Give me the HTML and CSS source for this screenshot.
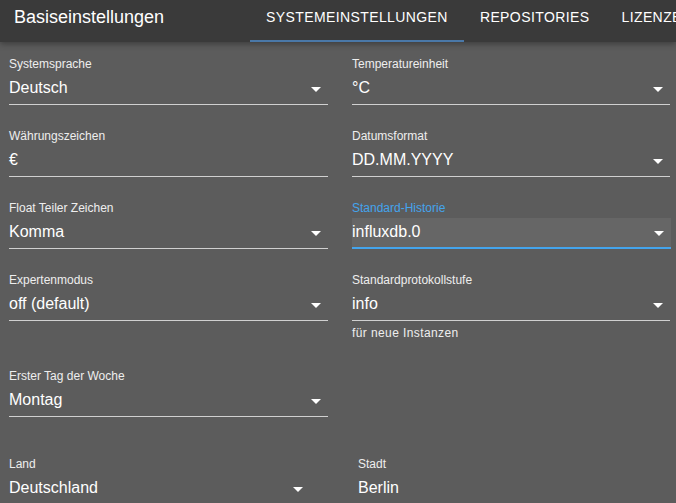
FILE: index.html
```html
<!DOCTYPE html>
<html lang="de">
<head>
<meta charset="utf-8">
<title>Basiseinstellungen</title>
<link rel="stylesheet" href="styles.css">
</head>
<body>
<header class="appbar">
  <div class="title">Basiseinstellungen</div>
  <nav class="tabs">
    <div class="tab active">SYSTEMEINSTELLUNGEN</div>
    <div class="tab">REPOSITORIES</div>
    <div class="tab">LIZENZEN</div>
  </nav>
</header>
<main class="content">
  <div class="grid">
    <div class="field">
      <div class="label">Systemsprache</div>
      <div class="control select"><span class="value">Deutsch</span><svg class="arrow" viewBox="0 0 24 24"><path d="M7 10l5 5 5-5z"/></svg></div>
    </div>
    <div class="field">
      <div class="label">Temperatureinheit</div>
      <div class="control select"><span class="value">°C</span><svg class="arrow" viewBox="0 0 24 24"><path d="M7 10l5 5 5-5z"/></svg></div>
    </div>
    <div class="field">
      <div class="label">Währungszeichen</div>
      <div class="control"><span class="value">€</span></div>
    </div>
    <div class="field">
      <div class="label">Datumsformat</div>
      <div class="control select"><span class="value">DD.MM.YYYY</span><svg class="arrow" viewBox="0 0 24 24"><path d="M7 10l5 5 5-5z"/></svg></div>
    </div>
    <div class="field">
      <div class="label">Float Teiler Zeichen</div>
      <div class="control select"><span class="value">Komma</span><svg class="arrow" viewBox="0 0 24 24"><path d="M7 10l5 5 5-5z"/></svg></div>
    </div>
    <div class="field focused">
      <div class="label">Standard-Historie</div>
      <div class="control select"><span class="value">influxdb.0</span><svg class="arrow" viewBox="0 0 24 24"><path d="M7 10l5 5 5-5z"/></svg></div>
    </div>
    <div class="field">
      <div class="label">Expertenmodus</div>
      <div class="control select"><span class="value">off (default)</span><svg class="arrow" viewBox="0 0 24 24"><path d="M7 10l5 5 5-5z"/></svg></div>
    </div>
    <div class="field">
      <div class="label">Standardprotokollstufe</div>
      <div class="control select"><span class="value">info</span><svg class="arrow" viewBox="0 0 24 24"><path d="M7 10l5 5 5-5z"/></svg></div>
      <div class="helper">für neue Instanzen</div>
    </div>
    <div class="field">
      <div class="label">Erster Tag der Woche</div>
      <div class="control select"><span class="value">Montag</span><svg class="arrow" viewBox="0 0 24 24"><path d="M7 10l5 5 5-5z"/></svg></div>
    </div>
  </div>
  <div class="grid location">
    <div class="field">
      <div class="label">Land</div>
      <div class="control select"><span class="value">Deutschland</span><svg class="arrow" viewBox="0 0 24 24"><path d="M7 10l5 5 5-5z"/></svg></div>
    </div>
    <div class="field">
      <div class="label">Stadt</div>
      <div class="control"><span class="value">Berlin</span></div>
    </div>
  </div>
</main>
</body>
</html>
```
FILE: styles.css
```css
* { box-sizing: border-box; }
html, body {
  margin: 0;
  padding: 0;
  width: 676px;
  height: 503px;
  overflow: hidden;
  background: #5c5c5c;
  font-family: "Liberation Sans", Arial, Helvetica, sans-serif;
  color: #ffffff;
}
.appbar {
  position: relative;
  z-index: 2;
  height: 42px;
  background: #3a3a3a;
  display: flex;
  align-items: stretch;
  box-shadow: 0 2px 6px rgba(0, 0, 0, 0.35);
  white-space: nowrap;
  overflow: hidden;
}
.title {
  font-size: 18px;
  line-height: 22px;
  padding: 6px 0 0 14px;
  width: 250px;
  flex: none;
}
.tabs {
  display: flex;
  align-items: stretch;
}
.tab {
  font-size: 14px;
  font-weight: 500;
  letter-spacing: 0.4px;
  line-height: 16px;
  padding: 9px 16px 0;
  border-bottom: 2px solid transparent;
  flex: none;
}
.tab.active {
  border-bottom-color: #4a78a8;
}
.content {
  padding: 15px 6px 0 9px;
}
.grid {
  display: grid;
  grid-template-columns: 319px 318px;
  column-gap: 24px;
  row-gap: 24px;
  align-items: start;
}
.grid.location {
  margin-top: 40px;
  grid-template-columns: 301px 200px;
  column-gap: 48px;
}
.field {
  display: flex;
  flex-direction: column;
}
.label {
  font-size: 12px;
  line-height: 14px;
  color: #eeeeee;
}
.control {
  position: relative;
  margin-top: 3px;
  height: 31px;
  padding: 4px 0 7px;
  border-bottom: 1px solid #d0d0d0;
}
.value {
  display: block;
  font-size: 16px;
  line-height: 19px;
  color: #ffffff;
}
.arrow {
  position: absolute;
  right: 0;
  top: 3px;
  width: 24px;
  height: 24px;
  fill: #ffffff;
}
.focused .label {
  color: #44a4ec;
}
.focused .control {
  background: #666666;
  border-bottom: 2px solid #44a4ec;
  padding-bottom: 6px;
  margin-right: -1px;
}
.helper {
  font-size: 12px;
  line-height: 14px;
  letter-spacing: 0.4px;
  margin-top: 5px;
  margin-bottom: 5px;
  color: #eeeeee;
}
.location .field:nth-child(2) .control {
  border-bottom: none;
}
```
